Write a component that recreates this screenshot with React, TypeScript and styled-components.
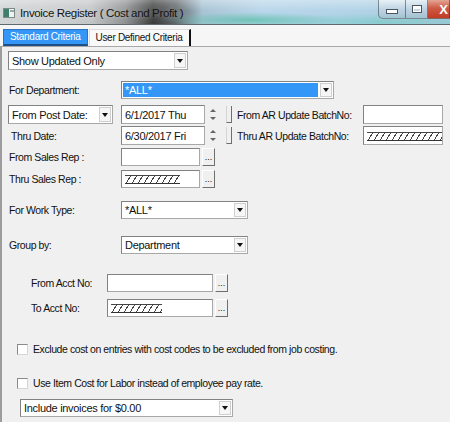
import styled, { createGlobalStyle } from "styled-components";

const Global = createGlobalStyle`
  html, body { margin: 0; padding: 0; background: #f0f0f0; }
  body { font-family: "Liberation Sans", Arial, sans-serif; color: #111; }
`;

const Window = styled.div`
  width: 450px;
  height: 422px;
  overflow: hidden;
  background: #f0f0f0;
  display: flex;
  flex-direction: column;
`;

const TitleBar = styled.div`
  height: 24px;
  flex: none;
  display: flex;
  align-items: center;
  border-bottom: 1px solid #5f6a70;
  background:
    linear-gradient(to bottom, rgba(255, 255, 255, 0.35), rgba(255, 255, 255, 0) 45%),
    radial-gradient(ellipse 90px 8px at 250px 20px, rgba(90, 190, 170, 0.75), rgba(90, 190, 170, 0)),
    radial-gradient(ellipse 130px 9px at 380px 22px, rgba(110, 200, 190, 0.6), rgba(110, 200, 190, 0)),
    linear-gradient(
      to right,
      #d2d6d7 0%,
      #c4c7c8 20%,
      #8e9192 28%,
      #3b3b3b 34%,
      #5e6468 39%,
      #a9c4d4 45%,
      #b9d6ea 58%,
      #b2d3e6 80%,
      #a7c9dd 100%
    );
`;

const AppIcon = styled.svg`
  margin: 2px 5px 0 3px;
  flex: none;
`;

const TitleText = styled.span`
  font-size: 11.5px;
  color: #141414;
  letter-spacing: -0.35px;
  text-shadow: 0 0 6px rgba(255, 255, 255, 0.7);
  margin-top: 1px;
`;

const WinButtons = styled.div`
  margin-left: auto;
  display: flex;
  align-self: flex-start;
  height: 19px;
`;

const WinBtn = styled.div<{ $w: number; $close?: boolean; $first?: boolean }>`
  width: ${(p) => p.$w}px;
  height: 19px;
  box-sizing: border-box;
  display: flex;
  align-items: center;
  justify-content: ${(p) => (p.$close ? "flex-end" : "center")};
  border: 1px solid rgba(50, 60, 70, 0.55);
  border-top: none;
  border-left-width: ${(p) => (p.$first ? 1 : 0)}px;
  border-radius: ${(p) => (p.$first ? "0 0 0 5px" : "0")};
  background: ${(p) =>
    p.$close
      ? "linear-gradient(to bottom, #e3a595 0%, #cf5a44 45%, #c03b26 100%)"
      : "linear-gradient(to bottom, rgba(255,255,255,0.55), rgba(205,215,225,0.45) 50%, rgba(170,185,200,0.45))"};
  color: #fff;
  font-size: 13px;
  font-weight: bold;
  padding-right: ${(p) => (p.$close ? 1 : 0)}px;
`;

const MinGlyph = styled.div`
  width: 10px;
  height: 3px;
  margin-top: 5px;
  background: #fff;
  border: 1px solid #4a5560;
`;

const MaxGlyph = styled.div`
  width: 8px;
  height: 6px;
  border: 1px solid #4a5560;
  box-shadow: inset 0 0 0 1px #fff, inset 0 2px 0 1px #fff;
  background: rgba(255, 255, 255, 0.2);
`;

const TabStrip = styled.div`
  height: 21px;
  flex: none;
  box-sizing: border-box;
  padding: 4px 0 0 3px;
  display: flex;
  background: #f6f6f6;
`;

const Tab = styled.div<{ $active?: boolean }>`
  height: 17px;
  box-sizing: border-box;
  display: flex;
  align-items: center;
  font-size: 10px;
  letter-spacing: -0.3px;
  padding: 0 6px 1px;
  background: ${(p) => (p.$active ? "#3497f7" : "#f9f9f9")};
  color: ${(p) => (p.$active ? "#fff" : "#111")};
  border: 1px solid ${(p) => (p.$active ? "#2b72c0" : "#dcdcdc")};
  border-bottom: ${(p) => (p.$active ? "2px solid #1d4f86" : "none")};
  border-right: ${(p) => (p.$active ? "1px solid #2b72c0" : "2px solid #111")};
  margin-left: ${(p) => (p.$active ? 0 : 1)}px;
`;

const Panel = styled.div`
  flex: 1;
  display: flex;
  flex-direction: column;
  border-top: 1px solid #a8a8a8;
  border-left: 2px solid #9c9c9c;
  padding-left: 6px;
  font-size: 10.5px;
  letter-spacing: -0.42px;
`;

const Row = styled.div<{ $mt: number; $pl?: number; $h?: number }>`
  display: flex;
  align-items: center;
  flex: none;
  margin-top: ${(p) => p.$mt}px;
  padding-left: ${(p) => p.$pl ?? 0}px;
  height: ${(p) => p.$h ?? 18}px;
`;

const Label = styled.span<{ $w: number; $pl?: number }>`
  width: ${(p) => p.$w}px;
  padding-left: ${(p) => p.$pl ?? 1}px;
  box-sizing: border-box;
  flex: none;
  white-space: nowrap;
`;

const Field = styled.div<{ $w: number; $ml?: number }>`
  width: ${(p) => p.$w}px;
  margin-left: ${(p) => p.$ml ?? 0}px;
  height: 100%;
  flex: none;
  box-sizing: border-box;
  background: #fff;
  border: 1px solid #828282;
  border-right-color: #a8a8a8;
  border-bottom-color: #a8a8a8;
  display: flex;
  align-items: center;
  padding-left: 3px;
  font-size: 11px;
  letter-spacing: -0.3px;
  white-space: nowrap;
`;

const SelectBox = styled(Field)`
  padding: 1px;
  justify-content: space-between;
`;

const SelectValue = styled.span<{ $hl?: boolean }>`
  flex: 1;
  align-self: stretch;
  display: flex;
  align-items: center;
  padding-left: 2px;
  background: ${(p) => (p.$hl ? "#3497f7" : "transparent")};
  color: ${(p) => (p.$hl ? "#fff" : "#111")};
  margin-right: 2px;
`;

const DropBtn = styled.span`
  width: 12px;
  align-self: stretch;
  flex: none;
  box-sizing: border-box;
  background: #f6f6f6;
  border: 1px solid #cfcfcf;
  display: flex;
  align-items: center;
  justify-content: center;
`;

const Spinner = styled.div`
  width: 12px;
  height: 100%;
  margin-left: 2px;
  display: flex;
  flex-direction: column;
  align-items: center;
  justify-content: center;
  gap: 5px;
  flex: none;
`;

const StubButton = styled.div`
  width: 6px;
  height: 17px;
  margin-left: 7px;
  box-sizing: border-box;
  border-left: 1px solid #d4d4d4;
  border-right: 1px solid #6f6f6f;
  border-bottom: 1px solid #6f6f6f;
  flex: none;
`;

const MoreBtn = styled.div`
  width: 13px;
  height: 100%;
  margin-left: 2px;
  box-sizing: border-box;
  flex: none;
  background: #f0f0f0;
  border: 1px solid #fff;
  border-right-color: #6f6f6f;
  border-bottom-color: #6f6f6f;
  display: flex;
  justify-content: center;
  align-items: flex-end;
  font-size: 9px;
  line-height: 9px;
  padding-bottom: 3px;
  letter-spacing: 0;
`;

const Hatch = styled.span<{ $w: number | string }>`
  display: block;
  width: ${(p) => (typeof p.$w === "number" ? `${p.$w}px` : p.$w)};
  height: 7px;
  margin-top: 1px;
  border-top: 1px solid #444;
  border-bottom: 1px solid #333;
  background: repeating-linear-gradient(120deg, transparent 0 4.2px, #444 4.2px 5.2px);
`;

const CheckBox = styled.span`
  width: 11px;
  height: 11px;
  box-sizing: border-box;
  margin-left: 9px;
  margin-right: 5px;
  background: #fff;
  border: 1px solid #8a8a8a;
  border-right-color: #d6d6d6;
  border-bottom-color: #d6d6d6;
  flex: none;
`;

const Down = () => (
  <svg width="6" height="4" viewBox="0 0 6 4">
    <path d="M0 0H6L3 4Z" fill="#111" />
  </svg>
);

const Tri = ({ up }: { up?: boolean }) => (
  <svg width="6" height="3" viewBox="0 0 6 3">
    <path d={up ? "M0 3L3 0L6 3Z" : "M0 0H6L3 3Z"} fill="#666" />
  </svg>
);

const Select = ({ w, value, ml, hl }: { w: number; value: string; ml?: number; hl?: boolean }) => (
  <SelectBox $w={w} $ml={ml}>
    <SelectValue $hl={hl}>{value}</SelectValue>
    <DropBtn>
      <Down />
    </DropBtn>
  </SelectBox>
);

export default function App() {
  return (
    <Window>
      <Global />
      <TitleBar>
        <AppIcon width="12" height="10" viewBox="0 0 12 10">
          <rect x="0.5" y="0.5" width="11" height="9" fill="#eef2f0" stroke="#7d8b86" />
          <rect x="1" y="1" width="5" height="8" fill="#3f7f6a" />
          <rect x="7" y="2" width="4" height="2" fill="#9aa6b0" />
        </AppIcon>
        <TitleText>Invoice Register ( Cost and Profit )</TitleText>
        <WinButtons>
          <WinBtn $w={28} $first>
            <MinGlyph />
          </WinBtn>
          <WinBtn $w={22}>
            <MaxGlyph />
          </WinBtn>
          <WinBtn $w={22} $close>
            X
          </WinBtn>
        </WinButtons>
      </TitleBar>

      <TabStrip>
        <Tab $active>Standard Criteria</Tab>
        <Tab>User Defined Criteria</Tab>
      </TabStrip>

      <Panel>
        <Row $mt={4} $h={19}>
          <Select w={180} value="Show Updated Only" />
        </Row>

        <Row $mt={11}>
          <Label $w={113}>For Department:</Label>
          <Select w={213} value="*ALL*" hl />
        </Row>

        <Row $mt={6} $h={19}>
          <Select w={105} value="From Post Date:" />
          <Field $w={84} $ml={8}>6/1/2017 Thu</Field>
          <Spinner>
            <Tri up />
            <Tri />
          </Spinner>
          <StubButton />
          <Label $w={131} $pl={5}>From AR Update BatchNo:</Label>
          <Field $w={80} />
        </Row>

        <Row $mt={2} $h={19}>
          <Label $w={113} $pl={3}>Thru Date:</Label>
          <Field $w={84}>6/30/2017 Fri</Field>
          <Spinner>
            <Tri up />
            <Tri />
          </Spinner>
          <StubButton />
          <Label $w={131} $pl={5}>Thru AR Update BatchNo:</Label>
          <Field $w={80}>
            <Hatch $w="100%" />
          </Field>
        </Row>

        <Row $mt={3}>
          <Label $w={113}>From Sales Rep :</Label>
          <Field $w={79} />
          <MoreBtn>...</MoreBtn>
        </Row>

        <Row $mt={4}>
          <Label $w={113}>Thru Sales Rep :</Label>
          <Field $w={79}>
            <Hatch $w={55} />
          </Field>
          <MoreBtn>...</MoreBtn>
        </Row>

        <Row $mt={13}>
          <Label $w={113}>For Work Type:</Label>
          <Select w={127} value="*ALL*" />
        </Row>

        <Row $mt={17}>
          <Label $w={113}>Group by:</Label>
          <Select w={127} value="Department" />
        </Row>

        <Row $mt={20} $pl={22}>
          <Label $w={77}>From Acct No:</Label>
          <Field $w={106} />
          <MoreBtn>...</MoreBtn>
        </Row>

        <Row $mt={7} $pl={22}>
          <Label $w={77}>To Acct No:</Label>
          <Field $w={106}>
            <Hatch $w={51} />
          </Field>
          <MoreBtn>...</MoreBtn>
        </Row>

        <Row $mt={26} $h={12}>
          <CheckBox />
          <span>Exclude cost on entries with cost codes to be excluded from job costing.</span>
        </Row>

        <Row $mt={22} $h={12}>
          <CheckBox />
          <span>Use Item Cost for Labor instead of employee pay rate.</span>
        </Row>

        <Row $mt={10} $pl={12}>
          <Select w={213} value="Include invoices for $0.00" />
        </Row>
      </Panel>
    </Window>
  );
}
